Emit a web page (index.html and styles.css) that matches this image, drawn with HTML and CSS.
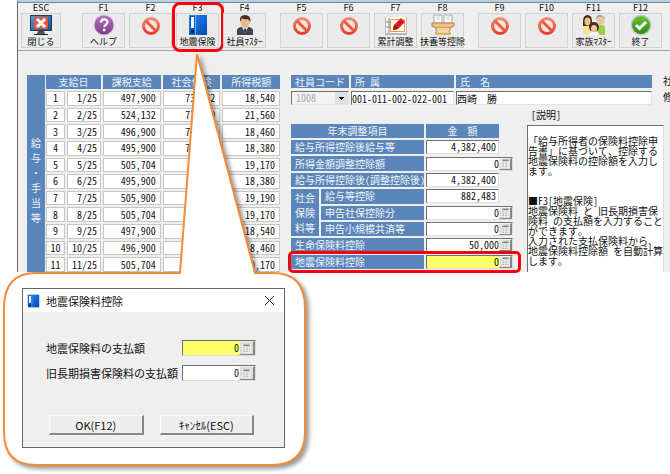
FILE: index.html
```html
<!DOCTYPE html>
<html lang="ja">
<head>
<meta charset="utf-8">
<title>地震保険料控除</title>
<link rel="stylesheet" href="styles.css">
</head>
<body>
<svg class="sprite" aria-hidden="true">
  <defs>
    <linearGradient id="g-red" x1="0" y1="0" x2="0" y2="1"><stop offset="0" stop-color="#f58a72"/><stop offset="1" stop-color="#e04128"/></linearGradient>
    <linearGradient id="g-purple" x1="0" y1="0" x2="0" y2="1"><stop offset="0" stop-color="#b672b8"/><stop offset="1" stop-color="#7c3a90"/></linearGradient>
    <linearGradient id="g-green" x1="0" y1="0" x2="0" y2="1"><stop offset="0" stop-color="#6cc035"/><stop offset="1" stop-color="#2f8a14"/></linearGradient>
    <linearGradient id="g-blue" x1="0" y1="0" x2="1" y2="1"><stop offset="0" stop-color="#1b8df0"/><stop offset="1" stop-color="#0748b4"/></linearGradient>
    <linearGradient id="g-screen" x1="0" y1="0" x2="1" y2="1"><stop offset="0" stop-color="#4f9ce0"/><stop offset="1" stop-color="#134a96"/></linearGradient>
  </defs>
  <symbol id="i-close" viewBox="0 0 24 22">
    <rect x="1" y="1" width="22" height="16" fill="#24384e"/><rect x="2" y="2" width="20" height="14" fill="url(#g-screen)"/>
    <rect x="5" y="3" width="14" height="12" rx="1" fill="#e2583a"/>
    <path d="M8 5l8 8M16 5l-8 8" stroke="#fff" stroke-width="3"/>
    <path d="M9 17h6l1 3H8z" fill="#42566a"/><path d="M5 20h14v1H5z" fill="#1c2b3c"/>
  </symbol>
  <symbol id="i-help" viewBox="0 0 22 22">
    <circle cx="11" cy="11" r="10.500" fill="#d9cede"/><circle cx="11" cy="11" r="9.500" fill="url(#g-purple)"/>
    <path d="M8 8.500c0-4 6.500-4 6.500-.4 0 2.500-3.200 2.500-3.200 5" fill="none" stroke="#fff" stroke-width="2.200"/><circle cx="11.200" cy="16" r="1.400" fill="#fff"/>
  </symbol>
  <symbol id="i-none" viewBox="0 0 22 22">
    <circle cx="11" cy="12" r="7.500" fill="#f6e5e1" stroke="url(#g-red)" stroke-width="3"/><path d="M6 7l10 10" stroke="#ea5c42" stroke-width="3"/>
  </symbol>
  <symbol id="i-book" viewBox="0 0 20 22">
    <rect x="1" y="1" width="18" height="20" fill="url(#g-blue)"/><rect x="2" y="2" width="5" height="18" fill="#0c56bb"/>
    <rect x="3" y="3" width="3" height="11" fill="#f4f8fc"/><circle cx="4.500" cy="17.500" r="1.500" fill="#071d46"/><path d="M7.500 1v20" stroke="#66b7fa"/>
  </symbol>
  <symbol id="i-person" viewBox="0 0 22 22">
    <path d="M3 21v-5q1-3 5-3h6q4 0 5 3v5z" fill="#3c4650"/><path d="M8 13l3 7 3-7z" fill="#f3f4f2"/><path d="M11 14l1.500 2L11 21l-1.500-5z" fill="#253c58"/>
    <ellipse cx="11" cy="8" rx="4.500" ry="6" fill="#eab987"/><path d="M6 8Q5 1 11 1t5.500 7L14 5q-4 1-6-1z" fill="#4a2c16"/>
  </symbol>
  <symbol id="i-note" viewBox="0 0 24 22">
    <rect x="1" y="3" width="22" height="18" fill="#b8b8b8"/><rect x="2" y="3" width="20" height="16" fill="#fff"/>
    <path d="M5 4v15M2 8h4M2 13h4" stroke="#789"/><path d="M6.500 5.500h14v12h-14z" fill="#fffdf6" stroke="#e99c35"/>
    <path d="M9 16l1-5 7-7 4 4-7 7z" fill="#df1717"/><path d="M10 11l4 4-5 1z" fill="#8c1212"/><path d="M17 4l4 4" stroke="#ff7f68"/>
  </symbol>
  <symbol id="i-desk" viewBox="0 0 28 22">
    <path d="M5 1h8v8H5zM15 1h8v8h-8z" fill="#fff" stroke="#a9a9a9"/><path d="M7 3h4M7 5h4M17 3h4M17 5h4" stroke="#ccc"/>
    <path d="M3 9h22v3q-3 2-6 2H9q-3 0-6-2z" fill="#ebc084" stroke="#b98348"/><path d="M7 14v3q7 4 14 0v-3" fill="#f5d49a" stroke="#b98348"/>
    <path d="M6 18h16v3H6z" fill="#dcae70"/><path d="M8 18h12" stroke="#ffedc2"/>
  </symbol>
  <symbol id="i-family" viewBox="0 0 24 22">
    <path d="M1 13q0-3 4-3t4 3v8H1z" fill="#efe498"/><path d="M1 8q0-7 4.500-7T10 8v4H1z" fill="#492915"/><ellipse cx="5.500" cy="7.500" rx="3" ry="4" fill="#ecc295"/>
    <path d="M15 14q0-3 4-3t4 3v7h-8z" fill="#9bce45"/><ellipse cx="18.500" cy="6" rx="4" ry="5" fill="#e7c5a0"/><path d="M14 6q0-6 4.500-5T23 6l-2-3h-5z" fill="#aaa79a"/>
    <path d="M7 21q0-4 5-4t5 4z" fill="#f4f4ef"/><ellipse cx="12" cy="13" rx="5" ry="5" fill="#53301c"/><ellipse cx="12" cy="14.500" rx="3" ry="3.500" fill="#edc59d"/>
  </symbol>
  <symbol id="i-done" viewBox="0 0 22 22">
    <circle cx="11" cy="11" r="10.500" fill="#c4cdbe"/><circle cx="11" cy="11" r="9" fill="url(#g-green)"/><path d="M6 11l3.500 3.500L16 8" fill="none" stroke="#fff" stroke-width="3"/>
  </symbol>
  <symbol id="i-calc" viewBox="0 0 9 10">
    <rect width="9" height="10" fill="#f4f4ee"/><path d="M1 1.500h7" stroke="#88877c" stroke-width="2"/><path d="M1 4.500h2m1 0h2m1 0h1M1 6.500h2m1 0h2m1 0h1M1 8.500h2m1 0h2m1 0h1" stroke="#aaa99c"/>
  </symbol>
</svg>

<div class="stage">
<main class="app">
  <nav class="toolbar" aria-label="ファンクションキー">
    <div class="key key-esc"><span class="key-name">ESC</span><button class="key-button"><svg><use href="#i-close"/></svg>閉じる</button></div>
    <div class="key-group">
      <div class="key"><span class="key-name">F1</span><button class="key-button"><svg><use href="#i-help"/></svg>ヘルプ</button></div>
      <div class="key"><span class="key-name">F2</span><button class="key-button" aria-label="F2"><svg><use href="#i-none"/></svg></button></div>
      <div class="key key-marked"><span class="key-name">F3</span><button class="key-button"><svg><use href="#i-book"/></svg>地震保険</button></div>
      <div class="key"><span class="key-name">F4</span><button class="key-button"><svg><use href="#i-person"/></svg>社員ﾏｽﾀｰ</button></div>
    </div>
    <div class="key-group">
      <div class="key"><span class="key-name">F5</span><button class="key-button" aria-label="F5"><svg><use href="#i-none"/></svg></button></div>
      <div class="key"><span class="key-name">F6</span><button class="key-button" aria-label="F6"><svg><use href="#i-none"/></svg></button></div>
      <div class="key"><span class="key-name">F7</span><button class="key-button"><svg><use href="#i-note"/></svg>累計調整</button></div>
      <div class="key"><span class="key-name">F8</span><button class="key-button"><svg><use href="#i-desk"/></svg>扶養等控除</button></div>
    </div>
    <div class="key-group">
      <div class="key"><span class="key-name">F9</span><button class="key-button" aria-label="F9"><svg><use href="#i-none"/></svg></button></div>
      <div class="key"><span class="key-name">F10</span><button class="key-button" aria-label="F10"><svg><use href="#i-none"/></svg></button></div>
      <div class="key"><span class="key-name">F11</span><button class="key-button"><svg><use href="#i-family"/></svg>家族ﾏｽﾀｰ</button></div>
      <div class="key"><span class="key-name">F12</span><button class="key-button"><svg><use href="#i-done"/></svg>終了</button></div>
    </div>
  </nav>

  <div class="workspace">
    <section class="pay">
      <div class="pay-side"><span>給</span><span>与</span><span>・</span><span>手</span><span>当</span><span>等</span></div>
      <table class="pay-table">
        <colgroup><col class="col-no"><col class="col-date"><col class="col-sum"><col class="col-sum"><col class="col-sum"></colgroup>
        <thead><tr><th colspan="2">支給日</th><th>課税支給</th><th>社会保険</th><th>所得税額</th></tr></thead>
        <tbody>
          <tr><td>1</td><td>1/25</td><td>497,900</td><td>73,262</td><td>18,540</td></tr>
          <tr><td>2</td><td>2/25</td><td>524,132</td><td>73,420</td><td>21,560</td></tr>
          <tr><td>3</td><td>3/25</td><td>496,900</td><td>73,259</td><td>18,460</td></tr>
          <tr><td>4</td><td>4/25</td><td>495,900</td><td>73,256</td><td>18,380</td></tr>
          <tr><td>5</td><td>5/25</td><td>505,704</td><td></td><td>19,170</td></tr>
          <tr><td>6</td><td>6/25</td><td>495,900</td><td></td><td>18,380</td></tr>
          <tr><td>7</td><td>7/25</td><td>505,900</td><td></td><td>19,190</td></tr>
          <tr><td>8</td><td>8/25</td><td>505,704</td><td></td><td>19,170</td></tr>
          <tr><td>9</td><td>9/25</td><td>497,900</td><td></td><td>18,540</td></tr>
          <tr><td>10</td><td>10/25</td><td>496,900</td><td></td><td>18,460</td></tr>
          <tr><td>11</td><td>11/25</td><td>505,704</td><td></td><td>19,170</td></tr>
        </tbody>
      </table>
    </section>

    <section class="detail">
      <div class="employee">
        <div class="field field-code"><label for="code">社員コード</label><select id="code" disabled><option>1008</option></select></div>
        <div class="field field-dept"><label for="dept">所 属</label><input id="dept" value="001-011-002-022-001"></div>
        <div class="field field-name"><label for="name">氏　名</label><input id="name" value="西崎　勝"></div>
        <div class="employee-more"><span>社</span><span>修</span></div>
      </div>

      <div class="columns">
        <table class="items">
          <colgroup><col class="col-group"><col class="col-item"><col class="col-amount"><col class="col-tool"></colgroup>
          <thead><tr><th class="item-title" colspan="2">年末調整項目</th><th class="item-title">金　額</th><td></td></tr></thead>
          <tbody>
            <tr><th colspan="2"><label for="a1">給与所得控除後給与等</label></th><td colspan="2"><div class="amount plain"><input id="a1" value="4,382,400"></div></td></tr>
            <tr><th colspan="2"><label for="a2">所得金額調整控除額</label></th><td colspan="2"><div class="amount"><input id="a2" value="0"><button class="calc" aria-label="電卓"><svg><use href="#i-calc"/></svg></button></div></td></tr>
            <tr><th colspan="2"><label for="a3">給与所得控除後(調整控除後)</label></th><td colspan="2"><div class="amount plain"><input id="a3" value="4,382,400"></div></td></tr>
            <tr><th class="item-group" rowspan="3">社会<br>保険<br>料等</th><th><label for="a4">給与等控除</label></th><td colspan="2"><div class="amount plain"><input id="a4" value="882,483"></div></td></tr>
            <tr><th><label for="a5">申告社保控除分</label></th><td colspan="2"><div class="amount"><input id="a5" value="0"><button class="calc" aria-label="電卓"><svg><use href="#i-calc"/></svg></button></div></td></tr>
            <tr><th><label for="a6">申告小規模共済等</label></th><td colspan="2"><div class="amount"><input id="a6" value="0"><button class="calc" aria-label="電卓"><svg><use href="#i-calc"/></svg></button></div></td></tr>
            <tr><th colspan="2"><label for="a7">生命保険料控除</label></th><td colspan="2"><div class="amount"><input id="a7" value="50,000"><button class="calc" aria-label="電卓"><svg><use href="#i-calc"/></svg></button></div></td></tr>
            <tr class="item-marked"><th colspan="2"><label for="a8">地震保険料控除</label></th><td colspan="2"><div class="amount current"><input id="a8" value="0"><button class="calc" aria-label="電卓"><svg><use href="#i-calc"/></svg></button></div></td></tr>
          </tbody>
        </table>

        <section class="note">
          <h2>[説明]</h2>
          <div class="note-text"><br>「給与所得者の保険料控除申<br>告書」に基づいて、控除する<br>地震保険料の控除額を入力し<br>ます。<br><br><br>■F3[地震保険]<br>地震保険料 と 旧長期損害保<br>険料 の支払額を入力すること<br>ができます。<br>入力された支払保険料から、<br>地震保険料控除額 を自動計算<br>します。</div>
        </section>
      </div>
    </section>
  </div>
</main>

<div class="callout">
  <svg class="callout-shape" viewBox="0 0 316 424" aria-hidden="true">
    <path d="M36 223H180L197 4L255 223H273Q305 223 305 258V382Q305 415 271 415H36Q4 415 4 382V258Q4 223 36 223Z"/>
  </svg>
  <form class="dialog" role="dialog" aria-label="地震保険料控除">
    <header class="dialog-title">
      <svg class="dialog-icon"><use href="#i-book"/></svg><span>地震保険料控除</span>
      <button class="dialog-close" type="button" aria-label="閉じる"><svg viewBox="0 0 11 11"><path d="M1 1l9 9M10 1l-9 9"/></svg></button>
    </header>
    <div class="dialog-body">
      <div class="dialog-row"><label for="d1">地震保険料の支払額</label><div class="amount current"><input id="d1" value="0"><button type="button" class="calc" aria-label="電卓"><svg><use href="#i-calc"/></svg></button></div></div>
      <div class="dialog-row"><label for="d2">旧長期損害保険料の支払額</label><div class="amount"><input id="d2" value="0"><button type="button" class="calc" aria-label="電卓"><svg><use href="#i-calc"/></svg></button></div></div>
      <div class="dialog-actions"><button type="button">OK(F12)</button><button type="button">ｷｬﾝｾﾙ(ESC)</button></div>
    </div>
  </form>
</div>
</div>
</body>
</html>
```
FILE: styles.css
```css
:root {
  --blue: #5b86ba;
  --face: #efefef;
  --dark: #707070;
  --orange: #f28c38;
  --mark: #fb0007;
}
* { box-sizing: border-box; }
body {
  margin: 0;
  background: #fff;
  color: #111;
  font: 10px/12px "Noto Sans Mono CJK JP", "Noto Sans CJK JP", sans-serif;
  text-spacing-trim: space-all;
}
input, button, select { margin: 0; padding: 0; font: inherit; color: inherit; border-radius: 0; }
.sprite { position: absolute; width: 0; height: 0; }
.stage { position: relative; overflow: hidden; min-height: 100vh; }

.app {
  margin-left: 17px;
  border-left: 1px solid #666;
  border-top: 2px solid #b5cfe4;
  background: var(--face);
}

/* Function key bar */
.toolbar {
  display: flex;
  gap: 14px;
  padding: 0 0 2px 3px;
  border-top: 1px solid #78868f;
  border-bottom: 1px solid #a3a3a3;
  font: 9px/10px "Noto Sans CJK JP", sans-serif;
}
.key-group { display: flex; gap: 4px; }
.key { position: relative; width: 43px; text-align: center; }
.key-esc { width: 40px; margin-right: 7px; }
.key-name { display: block; }
.key-button {
  display: flex;
  flex-direction: column;
  align-items: center;
  width: 100%;
  height: 35px;
  border: 1px solid #d2d2d2;
  background: #ebebeb;
  line-height: 11px;
  white-space: nowrap;
}
.key-button svg { flex: none; width: 28px; height: 22px; }
.key-marked::after {
  content: "";
  position: absolute;
  inset: -1px -5px -4px -4px;
  border: 3px solid var(--mark);
  border-radius: 8px;
}

.workspace { display: flex; gap: 11px; padding: 24px 0 0 9px; }

/* Monthly payments */
.pay { display: flex; gap: 1px; flex: none; }
.pay-side {
  display: flex;
  flex-direction: column;
  align-items: center;
  width: 18px;
  padding-top: 60px;
  background: var(--blue);
  color: #eef4fa;
  line-height: 15px;
}
.pay-table {
  width: 238px;
  height: 201px;
  margin: -2px;
  table-layout: fixed;
  border-spacing: 2px;
}
.col-no { width: 19px; }
.col-date { width: 34px; }
.pay-table th { height: 14px; padding: 0; background: var(--blue); color: #eef4fa; font-weight: normal; line-height: 12px; }
.pay-table td { padding: 0 4px; border: 1px solid #c6c6c6; background: #fff; text-align: right; line-height: 12px; }
.pay-table td:first-child { padding: 0; text-align: center; }
.pay-table td:nth-child(2) { padding: 0 3px; }

/* Employee header */
.detail { flex: 1; min-width: 0; }
.employee { display: flex; gap: 2px; overflow: hidden; }
.field { display: flex; flex-direction: column; gap: 3px; }
.field label { height: 13px; padding-left: 4px; background: var(--blue); color: #eef4fa; line-height: 13px; }
.field input, .field select {
  width: 100%;
  height: 14px;
  border: 1px solid #e3e3e3;
  border-top-color: var(--dark);
  border-left-color: var(--dark);
  background: #fff;
}
.field-code { flex: none; width: 58px; }
.field-code select {
  appearance: none;
  padding-left: 4px;
  color: #aaa;
  opacity: 1;
  background:
    linear-gradient(#111, #111) right 4px top 5px / 5px 1px no-repeat,
    linear-gradient(#111, #111) right 5px top 6px / 3px 1px no-repeat,
    linear-gradient(#111, #111) right 6px top 7px / 1px 1px no-repeat,
    linear-gradient(#e0e0e0, #e0e0e0) right / 13px 100% no-repeat,
    #f3f3f3;
}
.field-dept { flex: none; width: 103px; }
.field-name { flex: 1; }
.employee-more { display: flex; flex-direction: column; gap: 4px; flex: none; width: 7px; margin-left: 9px; overflow: hidden; white-space: nowrap; }

/* Adjustment items */
.columns { display: flex; gap: 12px; margin-top: 19px; }
.items {
  flex: none;
  width: 226px;
  height: 149px;
  margin: -2px;
  table-layout: fixed;
  border-spacing: 2px;
}
.col-group { width: 28px; }
.col-item { width: 103px; }
.col-amount { width: 73px; }
.col-tool { width: 12px; }
.items th { padding: 0 0 0 4px; background: var(--blue); color: #eef4fa; font-weight: normal; text-align: left; line-height: 12px; white-space: nowrap; }
.items td { padding: 0; }
.items .item-title { height: 14px; padding: 0; text-align: center; }
.items .item-group { line-height: 15px; }
.items label { display: block; }
.item-marked { position: relative; }
.item-marked::after {
  content: "";
  position: absolute;
  inset: -4px -6px -4px -3px;
  border: 3px solid var(--mark);
  border-radius: 5px;
  pointer-events: none;
}

.amount {
  display: flex;
  width: 87px;
  height: 14px;
  border: 1px solid #ddd;
  border-top-color: var(--dark);
  border-left-color: var(--dark);
  background: #fff;
}
.amount.plain { width: 73px; padding-right: 2px; }
.amount input { flex: 1; min-width: 0; border: 0; background: none; text-align: right; outline: 0; }
.amount.current input { background: #ffff68; }
.calc {
  display: flex;
  align-items: center;
  justify-content: center;
  flex: none;
  width: 13px;
  border: 1px solid #f2f2f2;
  border-right: 2px solid #858585;
  border-bottom-color: #858585;
  background: #ddd;
}
.calc svg { width: 9px; height: 9px; }

/* Help text */
.note { flex: none; display: flex; flex-direction: column; width: 137px; margin-top: -15px; }
.note h2 { margin: 0 0 4px 4px; font: inherit; }
.note-text {
  flex: 1;
  padding-bottom: 6px;
  border-top: 1px solid var(--dark);
  border-left: 1px solid var(--dark);
  border-right: 1px solid #ddd;
  background: #fff;
  line-height: 10px;
  white-space: nowrap;
}

/* Callout with the dialog */
.callout { position: absolute; left: 0; top: 50px; width: 316px; height: 424px; pointer-events: none; }
.callout-shape { position: absolute; inset: 0; width: 100%; height: 100%; filter: drop-shadow(3px 3px 2px #0006); }
.callout-shape path { fill: #fff; stroke: var(--orange); stroke-width: 2; }
.dialog {
  position: absolute;
  left: 22px;
  top: 238px;
  width: 263px;
  border: 1px solid #666;
  background: var(--face);
  font-family: "Noto Sans CJK JP", sans-serif;
  font-size: 11px;
  line-height: 14px;
  pointer-events: auto;
}
.dialog-title { display: flex; align-items: center; gap: 6px; height: 23px; padding: 0 9px 0 4px; background: #fff; }
.dialog-icon { width: 13px; height: 14px; }
.dialog-close { display: flex; margin-left: auto; border: 0; background: none; }
.dialog-close svg { width: 11px; height: 11px; fill: none; stroke: #222; }
.dialog-body { display: grid; gap: 9px; padding: 28px 28px 12px 23px; }
.dialog-row { display: flex; align-items: center; justify-content: space-between; }
.dialog-row .amount { width: 74px; height: 16px; font-family: "Noto Sans Mono CJK JP", "Noto Sans CJK JP", sans-serif; font-size: 10px; }
.dialog-row .calc { width: 16px; }
.dialog-actions { display: flex; gap: 16px; padding: 25px 2px 0 3px; }
.dialog-actions button {
  flex: 1;
  height: 20px;
  border: 1px solid #fafafa;
  border-right: 2px solid #888;
  border-bottom: 2px solid #888;
  background: #eee;
}
```
